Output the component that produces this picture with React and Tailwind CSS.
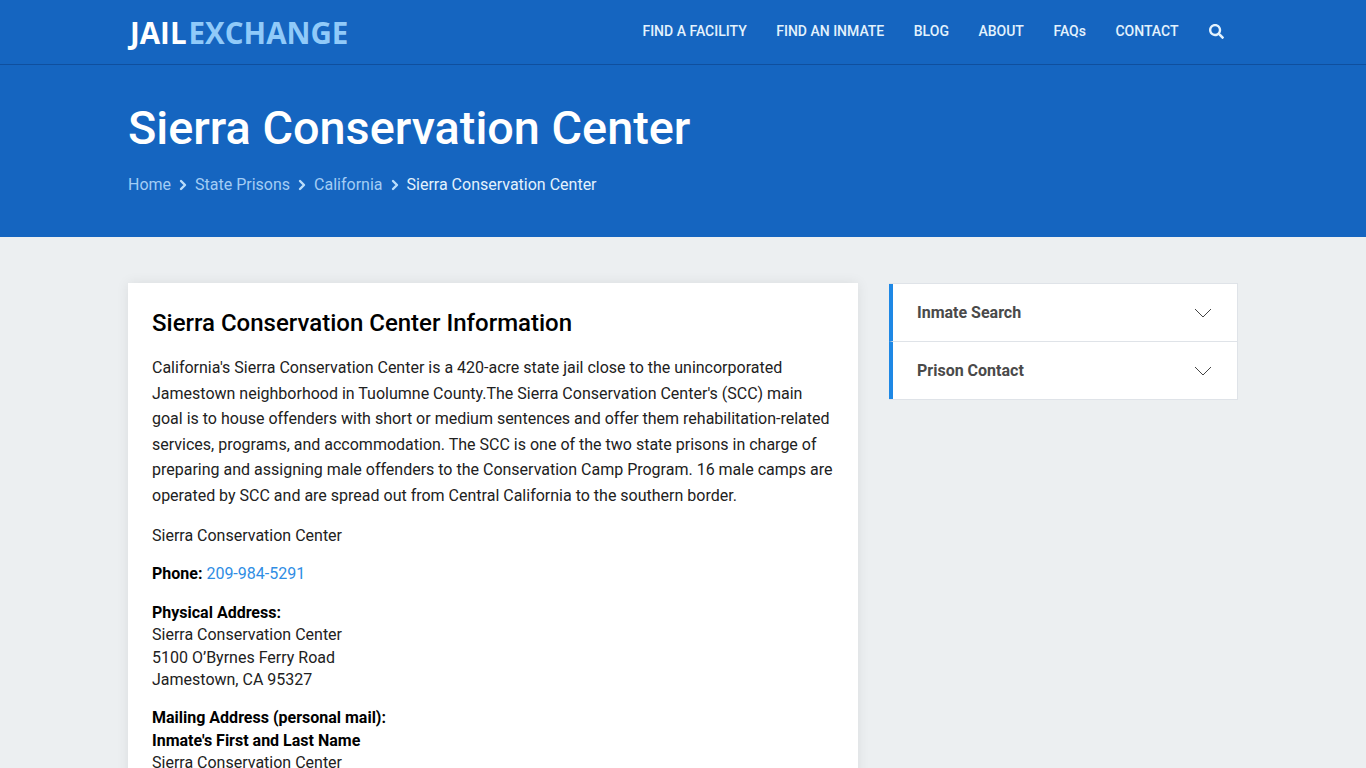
import { ChevronRight } from "lucide-react";
import { FaSearch } from "react-icons/fa";

const NAV_LINKS = ["FIND A FACILITY", "FIND AN INMATE", "BLOG", "ABOUT", "FAQs", "CONTACT"];
const CRUMBS = ["Home", "State Prisons", "California"];
const ACCORDION = ["Inmate Search", "Prison Contact"];

const Header = () => (
  <header className="h-[65px] border-b border-[#0f4f9e] bg-[#1565c0] shadow-[0_1px_3px_rgba(0,0,0,0.25)]">
    <div className="mx-auto flex h-full w-[1110px] items-center justify-between">
      <a className="ml-[2px] mt-[1px] flex font-['Open_Sans',sans-serif] text-[29.5px] font-bold leading-none">
        <span className="text-white">JAIL</span>
        <span className="ml-[2px] text-[#90caf9]">EXCHANGE</span>
      </a>
      <nav className="flex items-center gap-[29.5px] pb-[2px] pr-[14px]">
        {NAV_LINKS.map(link => (
          <a key={link} className="text-[14px] font-medium text-[#e3f2fd]">{link}</a>
        ))}
        <FaSearch className="ml-[1px] text-[15px] text-[#e3f2fd]" />
      </nav>
    </div>
  </header>
);

const Banner = () => (
  <section className="h-[172px] bg-[#1565c0]">
    <div className="mx-auto w-[1110px] pt-[35px]">
      <h1 className="text-[46.8px] font-medium leading-[56px] text-white">Sierra Conservation Center</h1>
      <div className="mt-[17px] flex items-center text-[16px] leading-[24px]">
        {CRUMBS.map(crumb => (
          <span key={crumb} className="flex items-center">
            <a className="text-[#a3cdf5]">{crumb}</a>
            <ChevronRight size={16} strokeWidth={3.6} className="mx-[4px] text-[#bbdefb]" />
          </span>
        ))}
        <span className="text-[#e3f2fd]">Sierra Conservation Center</span>
      </div>
    </div>
  </section>
);

const Information = () => (
  <article className="w-[730px] bg-white px-6 pb-10 pt-[24px] text-[16px] text-[#212121] shadow-[0_0_12px_rgba(0,0,0,0.08)]">
    <h2 className="text-[24px] font-medium leading-[32px] text-black">Sierra Conservation Center Information</h2>
    <p className="mt-[16px] leading-[25.6px]">
      California's Sierra Conservation Center is a 420-acre state jail close to the unincorporated Jamestown neighborhood in Tuolumne County.The Sierra Conservation Center's (SCC) main goal is to house offenders with short or medium sentences and offer them rehabilitation-related services, programs, and accommodation. The SCC is one of the two state prisons in charge of preparing and assigning male offenders to the Conservation Camp Program. 16 male camps are operated by SCC and are spread out from Central California to the southern border.
    </p>
    <p className="mt-[15px] leading-[24px]">Sierra Conservation Center</p>
    <p className="mt-[15px] leading-[22.4px]">
      <strong className="font-bold text-black">Phone:</strong>{" "}
      <a className="text-[#2f8de4]">209-984-5291</a>
    </p>
    <p className="mt-[17px] leading-[22.4px]">
      <strong className="font-bold text-black">Physical Address:</strong><br />
      Sierra Conservation Center<br />
      5100 O’Byrnes Ferry Road<br />
      Jamestown, CA 95327
    </p>
    <p className="mt-[15.6px] leading-[22.4px]">
      <strong className="font-bold text-black">Mailing Address (personal mail):</strong><br />
      <strong className="font-bold text-black">Inmate's First and Last Name</strong><br />
      Sierra Conservation Center<br />
      5150 O’Byrnes Ferry Road<br />
      Jamestown, CA 95327
    </p>
  </article>
);

const Sidebar = () => (
  <aside className="w-[349px] border-y border-r border-[#dfe3e8] bg-white">
    {ACCORDION.map((title, index) => (
      <button
        key={title}
        type="button"
        className={`flex w-full items-center justify-between border-l-[4px] border-l-[#1e88e5] pl-[24px] pr-[25px] ${index ? "h-[58px] border-t border-t-[#dfe3e8]" : "h-[57px]"}`}
      >
        <span className="text-[16px] font-bold text-[#4a4a4a]">{title}</span>
        <svg width="18" height="10" viewBox="0 0 18 10" fill="none" stroke="#444444" strokeWidth="1">
          <path d="M1 1l8 8 8-8" />
        </svg>
      </button>
    ))}
  </aside>
);

export default function App() {
  return (
    <div className="h-[768px] overflow-hidden bg-[#eceff1] font-['Roboto',sans-serif]">
      <Header />
      <Banner />
      <main className="mx-auto flex w-[1110px] items-start justify-between pt-[46px]">
        <Information />
        <Sidebar />
      </main>
    </div>
  );
}
